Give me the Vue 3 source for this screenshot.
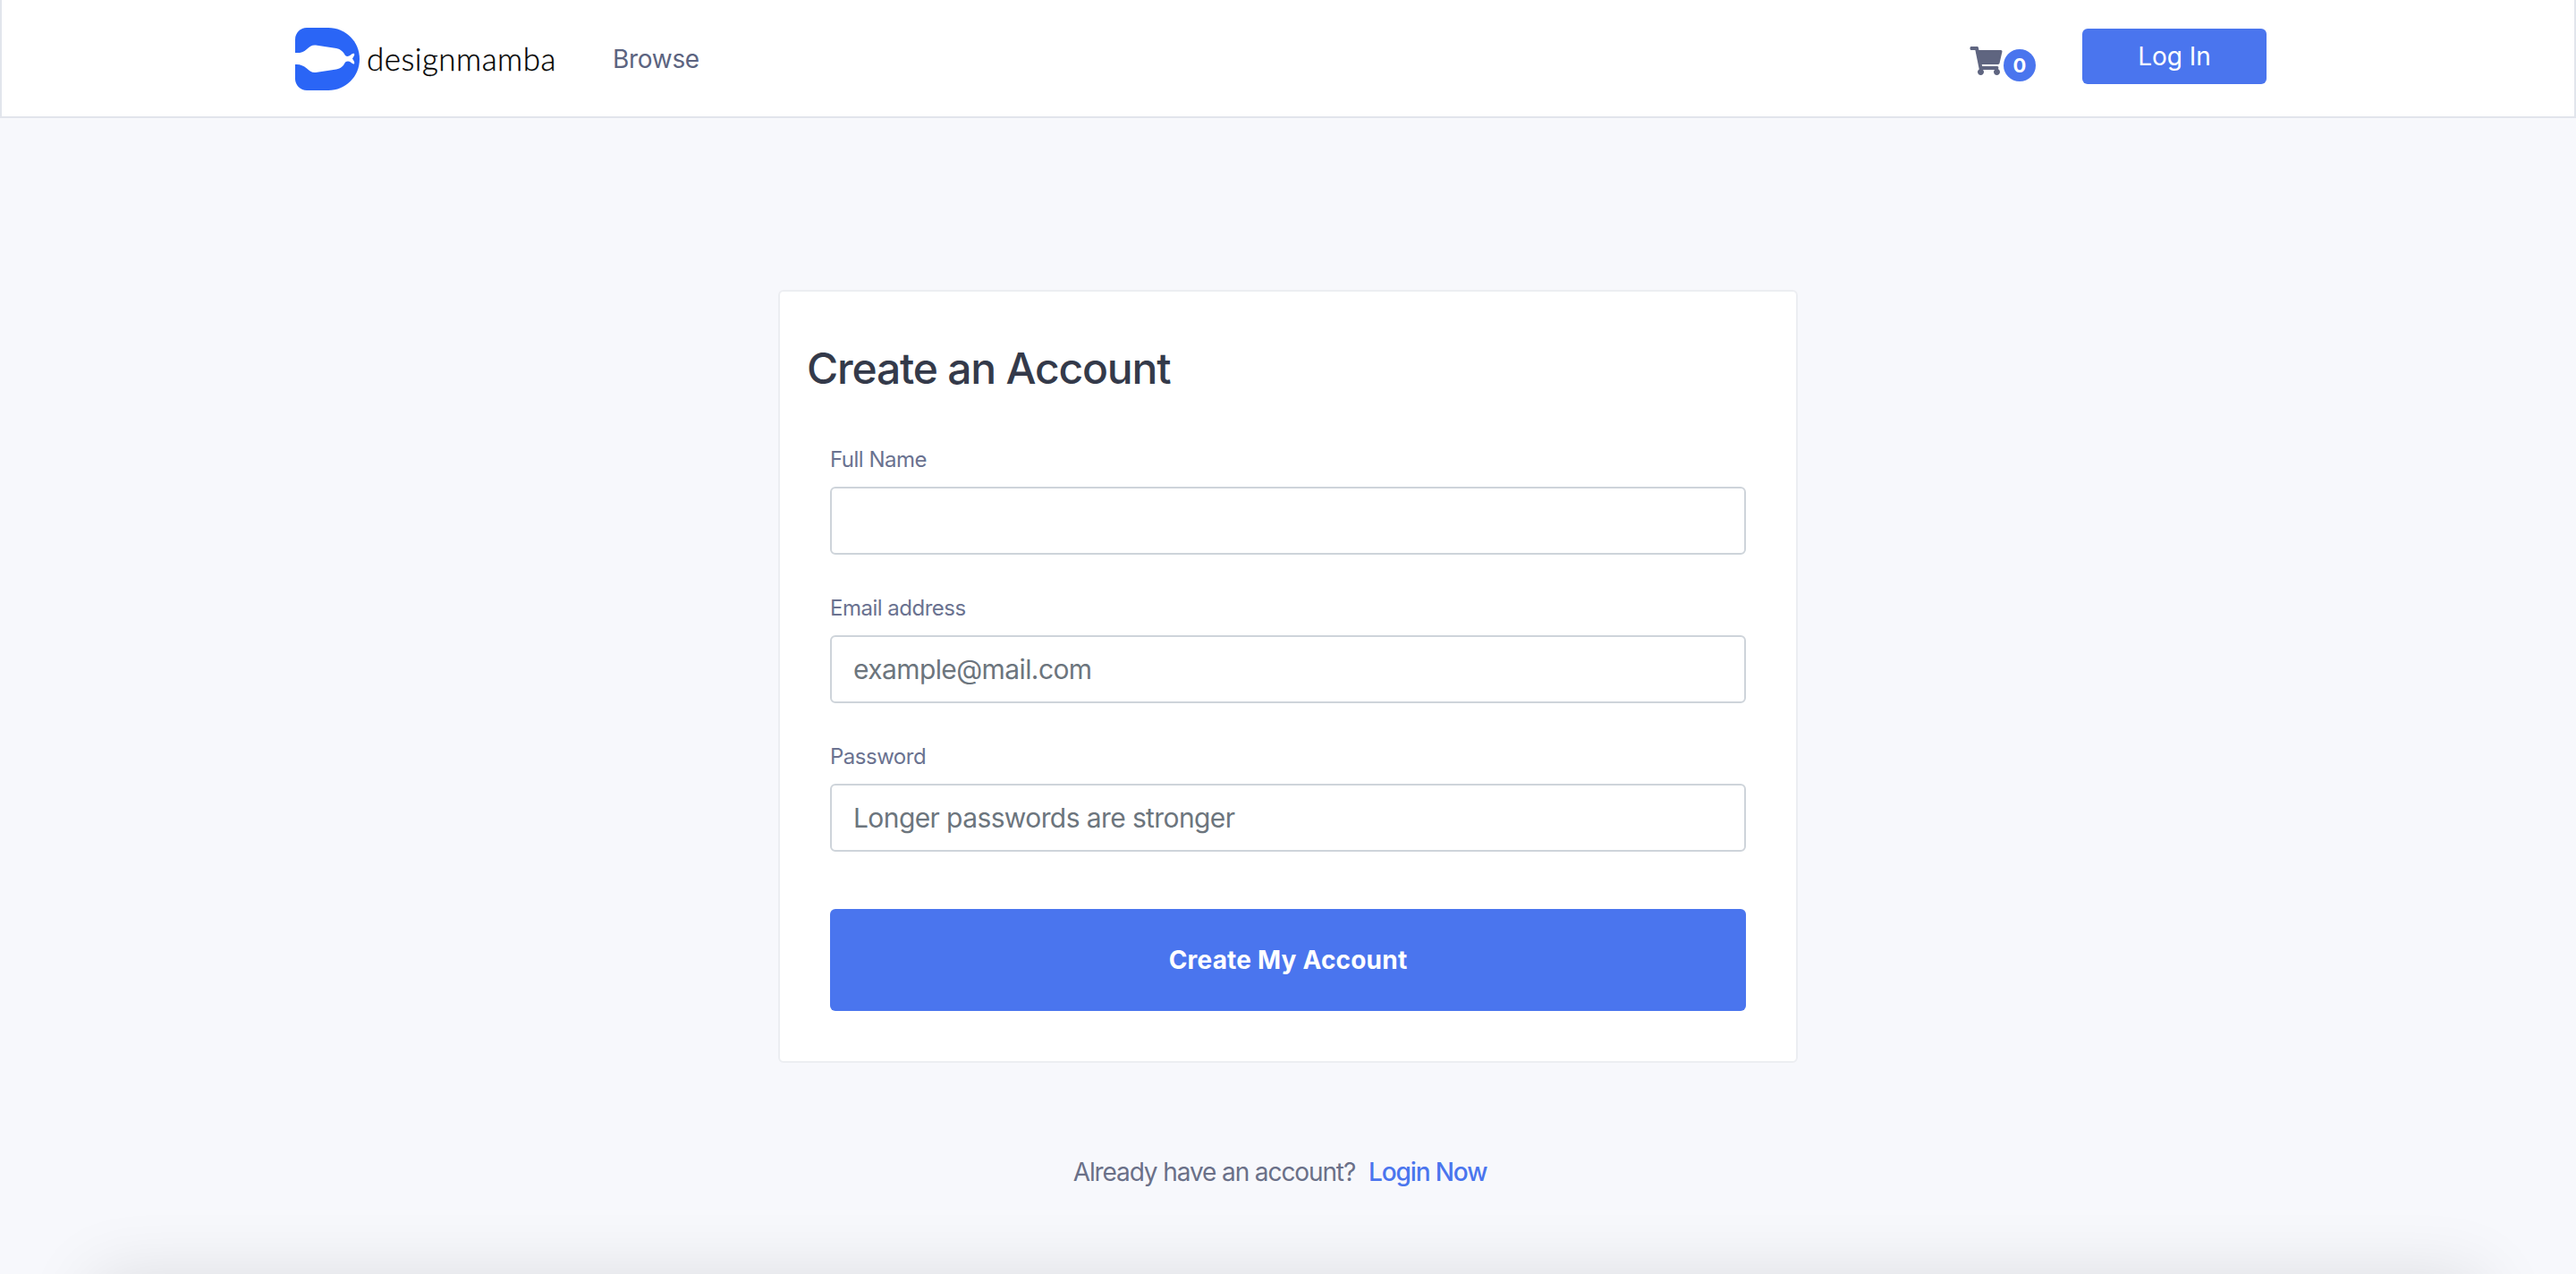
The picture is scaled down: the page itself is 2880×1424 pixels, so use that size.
<script setup>
import { ref } from 'vue';

const fullName = ref('');
const email = ref('');
const password = ref('');

const fields = [
  { id: 'name', label: 'Full Name', type: 'text', placeholder: '', model: fullName },
  { id: 'email', label: 'Email address', type: 'email', placeholder: 'example@mail.com', model: email },
  { id: 'password', label: 'Password', type: 'password', placeholder: 'Longer passwords are stronger', model: password }
];
</script>

<template>
  <div class="page">
    <header class="site-header">
      <div class="header-inner">
        <a class="brand" href="#">
          <svg class="brand-mark" viewBox="0 0 72 70" width="72" height="70">
            <path fill="#2a65f6" d="M13 0H37C56.5 0 72 15.5 72 35S56.5 70 37 70H13C5.8 70 0 64.2 0 57V13C0 5.800 5.800 0 13 0Z" />
            <path fill="#fff" d="M0 28C5 28.500 9 27.500 13 24C16 21 19 19 23 19.500L46 23C51 24 54 27 56 31C58 32.500 60 32 62 30.500C63.500 29 65 28.200 66 29C67 30 65.500 32 64 34.500C65.500 37 67 39 66 40.200C65 41 63.500 39.800 62 38.500C60 37 58 37 56 38.500C54 43 51 45.500 46 46.500L23 50C19 50.500 16 48.500 13 45.500C9 42 5 40.500 0 41Z" />
          </svg>
          <span class="brand-name">designmamba</span>
        </a>
        <a class="nav-link" href="#">Browse</a>
        <a class="cart" href="#">
          <svg class="cart-icon" viewBox="0 0 576 512" width="37" height="32">
            <path fill="currentColor" d="M528.12 301.319l47.273-208C578.806 78.301 567.391 64 551.99 64H159.208l-9.166-44.81C147.758 8.021 137.93 0 126.529 0H24C10.745 0 0 10.745 0 24v16c0 13.255 10.745 24 24 24h69.883l70.248 343.435C147.325 417.1 136 435.222 136 456c0 30.928 25.072 56 56 56s56-25.072 56-56c0-15.674-6.447-29.835-16.824-40h209.647C430.447 426.165 424 440.326 424 456c0 30.928 25.072 56 56 56s56-25.072 56-56c0-22.172-12.888-41.332-31.579-50.405l5.517-24.276c3.413-15.018-8.002-29.319-23.403-29.319H218.117l-6.545-32h293.145c11.206 0 20.92-7.754 23.403-18.681z" />
          </svg>
          <span class="cart-count">0</span>
        </a>
        <button class="login-btn" type="button">Log In</button>
      </div>
    </header>

    <main class="content">
      <section class="card">
        <h1 class="card-title">Create an Account</h1>
        <form class="signup-form" @submit.prevent>
          <div v-for="field in fields" :key="field.id" class="form-group">
            <label class="form-label" :for="field.id">{{ field.label }}</label>
            <input
              :id="field.id"
              v-model="field.model.value"
              class="form-input"
              :type="field.type"
              :placeholder="field.placeholder"
            />
          </div>
          <button class="submit-btn" type="submit">Create My Account</button>
        </form>
      </section>

      <p class="login-hint">
        Already have an account?
        <a class="login-link" href="#">Login Now</a>
      </p>
    </main>

    <footer class="site-footer"></footer>
  </div>
</template>

<style>
html,
body {
  margin: 0;
  background: #f7f8fc;
}
</style>

<style scoped>
.page {
  height: 1424px;
  overflow: hidden;
  background: #f7f8fc;
  font-family: Inter, "Liberation Sans", sans-serif;
}

.site-header {
  height: 132px;
  box-sizing: border-box;
  background: #fff;
  border-left: 2px solid #e2e5ec;
  border-right: 2px solid #e2e5ec;
  border-bottom: 2px solid #e2e5ec;
}

.header-inner {
  display: flex;
  align-items: center;
  height: 130px;
  padding: 0 344px 0 328px;
}

.brand {
  display: flex;
  align-items: center;
  gap: 8px;
  color: #000;
  text-decoration: none;
}

.brand-mark {
  display: block;
  margin-top: 2px;
}

.brand-name {
  width: 208px;
  font-family: Lato, sans-serif;
  font-size: 35px;
  font-weight: 300;
  line-height: 40px;
  letter-spacing: 0.45px;
  -webkit-text-stroke: 0.3px #000;
}

.nav-link {
  margin-left: 67px;
  margin-top: 1px;
  color: #5c6480;
  font-size: 28px;
  letter-spacing: -0.3px;
  text-decoration: none;
}

.cart {
  display: flex;
  align-items: flex-start;
  margin-left: auto;
  margin-right: 52px;
  padding-top: 12px;
  color: #5f6580;
  text-decoration: none;
}

.cart-icon {
  display: block;
  margin-right: 1px;
}

.cart-count {
  width: 36px;
  height: 36px;
  margin-top: 3px;
  border-radius: 50%;
  background: #4a75ee;
  color: #fff;
  font-size: 22px;
  font-weight: 700;
  line-height: 36px;
  text-align: center;
}

.login-btn {
  width: 206px;
  height: 62px;
  margin-bottom: 4px;
  border: 0;
  border-radius: 6px;
  background: #4a75ee;
  color: #fff;
  font-family: inherit;
  font-size: 28px;
}

.content {
  display: flex;
  flex-direction: column;
  align-items: center;
  padding-top: 192px;
}

.card {
  box-sizing: border-box;
  width: 1140px;
  height: 864px;
  padding: 60px 56px 0 30px;
  background: #fff;
  border: 2px solid #eceef2;
  border-radius: 6px;
}

.card-title {
  margin: 0 0 61px;
  color: #343a4a;
  font-size: 48px;
  font-weight: 500;
  line-height: 52px;
  letter-spacing: -1.2px;
}

.signup-form {
  padding-left: 26px;
}

.form-group {
  margin-bottom: 45px;
}

.form-label {
  display: block;
  margin-bottom: 15px;
  color: #6a7290;
  font-size: 24px;
  line-height: 30px;
  letter-spacing: -0.5px;
}

.form-input {
  display: block;
  box-sizing: border-box;
  width: 100%;
  height: 76px;
  padding: 0 24px;
  background: #fff;
  border: 2px solid #ced4da;
  border-radius: 6px;
  color: #495057;
  font-family: inherit;
  font-size: 30px;
  letter-spacing: -0.6px;
  outline: none;
}

.form-input::placeholder {
  color: #6c757d;
  opacity: 1;
}

.submit-btn {
  display: block;
  width: 100%;
  height: 114px;
  margin-top: 64px;
  border: 0;
  border-radius: 6px;
  background: #4a75ee;
  color: #fff;
  font-family: inherit;
  font-size: 28px;
  font-weight: 700;
  letter-spacing: 0.2px;
}

.login-hint {
  margin: 104px 18px 0 0;
  color: #6a7088;
  font-size: 28px;
  line-height: 36px;
  letter-spacing: -1.1px;
}

.login-link {
  margin-left: 8px;
  color: #4a75ee;
  font-weight: 500;
  text-decoration: none;
}

.site-footer {
  height: 200px;
  margin: 100px 105px 0;
  background: #fff;
  box-shadow: 0 0 80px rgba(0, 0, 0, 0.12);
}
</style>
